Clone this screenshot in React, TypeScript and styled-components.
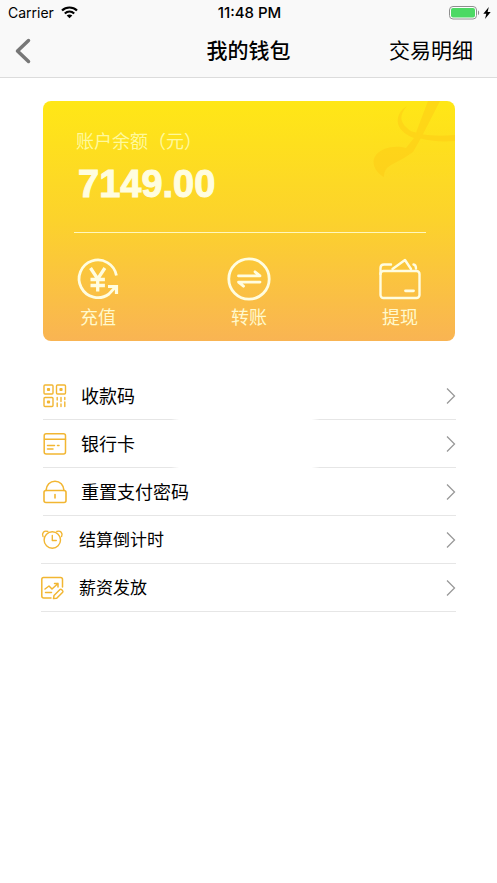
import React from "react";
import styled, { createGlobalStyle } from "styled-components";

const GlobalStyle = createGlobalStyle`
  * { box-sizing: border-box; }
  body {
    margin: 0;
    background: #fff;
    color: #000;
    font-family: "Liberation Sans", "Noto Sans CJK SC", sans-serif;
  }
  button, a { font: inherit; color: inherit; }
  svg { display: block; flex: none; overflow: visible; }
`;

const Page = styled.div`
  min-height: 100vh;
  background: #fff;
`;

const Header = styled.header`
  background: #f9f9f9;
  border-bottom: 1px solid #dcdcdc;
`;

const StatusBar = styled.div`
  display: grid;
  grid-template-columns: 1fr auto 1fr;
  align-items: center;
  height: 25px;
  padding: 0 6px 0 8px;
  font-family: Inter, sans-serif;
  font-size: 14px;
`;

const Carrier = styled.div`
  display: flex;
  align-items: center;
  gap: 7px;
`;

const Clock = styled.time`
  font-size: 15px;
  font-weight: 500;
`;

const Power = styled.div`
  display: flex;
  align-items: center;
  justify-content: flex-end;
  gap: 3px;
`;

const NavBar = styled.nav`
  display: grid;
  grid-template-columns: 1fr auto 1fr;
  align-items: center;
  height: 52px;
  padding: 0 15px;
`;

const BackButton = styled.button`
  justify-self: start;
  padding: 0;
  border: 0;
  background: none;
  color: #777;
  cursor: pointer;
`;

const Title = styled.h1`
  margin: 0;
  font-size: 21px;
  line-height: 30px;
  font-weight: 500;
`;

const NavLink = styled.a`
  justify-self: end;
  padding-right: 9px;
  font-size: 21px;
  line-height: 30px;
  font-weight: 400;
  text-decoration: none;
`;

const Card = styled.section`
  position: relative;
  overflow: hidden;
  margin: 23px 42px 0 43px;
  padding: 28px 29px 10px 31px;
  border-radius: 8px;
  background: linear-gradient(#ffe716, #fcd22c 50%, #f9b453);
  color: #fffde0;
`;

const Flourish = styled.svg`
  position: absolute;
  top: 0;
  right: 0;
`;

const BalanceLabel = styled.div`
  padding-left: 2px;
  font-size: 18px;
  line-height: 26px;
  color: #fff99c;
`;

const Amount = styled.div`
  padding: 7px 0 0 4px;
  font-size: 38px;
  line-height: 44px;
  font-weight: 700;
  -webkit-text-stroke: 1px #fffde0;
`;

const Actions = styled.div`
  display: flex;
  justify-content: space-between;
  margin-top: 26px;
  padding: 24px 5px 0 3px;
  border-top: 1px solid #fff8bd;
`;

const Action = styled.button`
  display: flex;
  flex-direction: column;
  align-items: center;
  gap: 4px;
  padding: 0;
  border: 0;
  background: none;
  font-size: 18px;
  line-height: 26px;
  color: #fff9cc;
  cursor: pointer;
`;

const ActionIcon = styled.span`
  display: grid;
  place-items: center;
  height: 44px;
  color: #fffde0;
`;

const Menu = styled.ul`
  list-style: none;
  margin: 31px 41px 0;
  padding: 0;
`;

const MenuItem = styled.li<{ $broken?: boolean; $inset?: boolean }>`
  margin-left: ${(p) => (p.$inset ? 2 : 0)}px;
  background: ${(p) =>
    p.$broken
      ? "linear-gradient(90deg, #e6e6e6 31%, transparent 33% 65%, #e6e6e6 67%)"
      : "linear-gradient(#e6e6e6, #e6e6e6)"}
    bottom / 100% 1px no-repeat;
`;

const MenuLink = styled.a<{ $inset?: boolean }>`
  display: grid;
  grid-template-columns: 24px 1fr auto;
  align-items: center;
  column-gap: 14px;
  height: 48px;
  font-size: ${(p) => (p.$inset ? 18 : 17)}px;
  line-height: 26px;
  text-decoration: none;
`;

const MenuLabel = styled.span`
  padding-top: 2px;
`;

const line = {
  fill: "none",
  stroke: "currentColor",
  strokeLinecap: "round" as const,
  strokeLinejoin: "round" as const,
};

const WifiIcon = () => (
  <svg width="17" height="13" viewBox="0 0 17 13" aria-hidden="true">
    <g fill="none" stroke="#000" strokeWidth="2.2">
      <path d="M1 4.5C5.2.5 11.8.5 16 4.5" />
      <path d="M3.8 7.5c2.7-2.5 6.7-2.5 9.4 0" />
    </g>
    <path d="M5.7 9.5c1.7-1.5 3.9-1.5 5.6 0L8.5 12.3z" />
  </svg>
);

const BatteryIcon = () => (
  <svg width="31" height="14" viewBox="0 0 31 14" aria-hidden="true">
    <rect x=".5" y=".5" width="27" height="12.5" rx="3.5" fill="#fff" stroke="#8f8f8f" />
    <rect x="2" y="2" width="24" height="9.5" rx="2" fill="#4cd964" />
    <path d="M29 4.5c1.5.6 1.5 3.9 0 4.5z" fill="#8f8f8f" />
  </svg>
);

const BoltIcon = () => (
  <svg width="8" height="12" viewBox="0 0 8 12" aria-hidden="true">
    <path d="M5.8 0 .3 6.7h3L2 12l5.7-7H4.6z" />
  </svg>
);

const BackIcon = () => (
  <svg width="16" height="26" viewBox="0 0 16 26" aria-hidden="true">
    <path d="M13.5 2.5 2.5 13l11 10.5" {...line} strokeWidth="3.5" />
  </svg>
);

const RechargeIcon = () => (
  <svg width="42" height="42" viewBox="0 0 42 42" aria-hidden="true">
    <g {...line} strokeWidth="2.8" strokeLinecap="butt" strokeLinejoin="miter">
      <path d="M39.4 17.5A18.8 18.8 0 1 0 32 36L38 29.5" />
      <path d="M31 28.5H39.5V36" strokeWidth="3.2" />
      <path d="m13.5 10 7.2 11 7.2-11M20.7 20.5v13M13.5 21.5h14.4M13.5 27.5h14.4" strokeWidth="3.3" />
    </g>
  </svg>
);

const TransferIcon = () => (
  <svg width="44" height="44" viewBox="0 0 44 44" aria-hidden="true">
    <g {...line} strokeWidth="2.8">
      <circle cx="22" cy="22" r="20.2" />
      <path d="M11.5 18.9h21.5L28 14.8" />
      <path d="M33 25.1H11.5L16.5 29.2" />
    </g>
  </svg>
);

const WithdrawIcon = () => (
  <svg width="42" height="42" viewBox="0 0 42 42" aria-hidden="true">
    <g {...line} strokeWidth="2.4">
      <rect x="1.5" y="13" width="39" height="27" rx="3" />
      <path d="M1.5 16V10C1.5 7.7 3 6.5 5 6.5h7" />
      <path d="M13.5 11 26 2 32 11M34.5 6.5c1.7.3 2.5 1.5 2.5 4" />
      <path d="M26.5 32.8h8" strokeWidth="2.8" />
    </g>
  </svg>
);

const QrIcon = () => (
  <svg width="24" height="24" viewBox="0 0 24 24" aria-hidden="true">
    <g {...line} strokeWidth="1.4">
      <rect x="1" y="1" width="9" height="9" rx="1" />
      <rect x="13.5" y="1" width="9" height="9" rx="1" />
      <rect x="1" y="13.5" width="9" height="9" rx="1" />
      <path d="M14.2 13.5v2.5M14.2 19v3.5M18 13.5v4M18 20v2.5M21.8 13.5v2M21.8 18v4.5" />
    </g>
    <g fill="currentColor">
      <rect x="3.9" y="3.9" width="3.2" height="3.2" rx="1" />
      <rect x="16.4" y="3.9" width="3.2" height="3.2" rx="1" />
      <rect x="3.9" y="16.4" width="3.2" height="3.2" rx="1" />
    </g>
  </svg>
);

const BankCardIcon = () => (
  <svg width="24" height="24" viewBox="0 0 24 24" aria-hidden="true">
    <g {...line} strokeWidth="1.5">
      <rect x="1.2" y="1.7" width="21.3" height="20.3" rx="2" />
      <path d="M1.5 7.2h21M4.5 13.5h7M14.5 13.5h1.5M4.5 17h5.5" />
    </g>
  </svg>
);

const LockIcon = () => (
  <svg width="24" height="24" viewBox="0 0 24 24" aria-hidden="true">
    <g {...line} strokeWidth="1.6">
      <rect x="1" y="10.5" width="22" height="12" rx="2" />
      <path d="M3 10.5C3.3 5 7 1.2 12 1.2S20.7 5 21 10.5M12 14.5v3.5" />
    </g>
  </svg>
);

const AlarmIcon = () => (
  <svg width="24" height="24" viewBox="0 0 24 24" aria-hidden="true">
    <g {...line} strokeWidth="1.4">
      <circle cx="11.3" cy="12" r="8.2" />
      <path d="M11.3 7.5v5h4M2 8.500C.5 5.500 3 2 6.800 3.500M20.600 8.500C22.100 5.500 19.600 2 15.800 3.500" />
    </g>
  </svg>
);

const PayrollIcon = () => (
  <svg width="24" height="24" viewBox="0 0 24 24" aria-hidden="true">
    <g {...line} strokeWidth="1.5">
      <path d="M21.5 11V3.5c0-1.500-.7-2-2-2H2.500C1.300 1.500.8 2.200.8 3.500v16.500c0 1.300.7 2 2 2H10" />
      <path d="m4 13 4-3 3 3 6-5.500M13.500 7.500H17V11M4.500 16.500h6" />
      <path d="m13 19.500 6-6c1-1 3.700 1.500 2.700 2.700l-6 6-3.200.4z" />
    </g>
  </svg>
);

const ChevronIcon = () => (
  <svg width="10" height="18" viewBox="0 0 10 18" aria-hidden="true">
    <path d="M1 1.5 8.5 9 1 16.5" fill="none" stroke="#999" strokeWidth="1.3" />
  </svg>
);

const IconSlot = styled.span`
  color: #f2b632;
`;

const actions = [
  { label: "充值", Icon: RechargeIcon },
  { label: "转账", Icon: TransferIcon },
  { label: "提现", Icon: WithdrawIcon },
];

const items = [
  { label: "收款码", Icon: QrIcon, inset: true, broken: true },
  { label: "银行卡", Icon: BankCardIcon, inset: true, broken: true },
  { label: "重置支付密码", Icon: LockIcon, inset: true },
  { label: "结算倒计时", Icon: AlarmIcon },
  { label: "薪资发放", Icon: PayrollIcon },
];

export default function App() {
  return (
    <Page>
      <GlobalStyle />
      <Header>
        <StatusBar>
          <Carrier>
            Carrier
            <WifiIcon />
          </Carrier>
          <Clock>11:48 PM</Clock>
          <Power>
            <BatteryIcon />
            <BoltIcon />
          </Power>
        </StatusBar>
        <NavBar>
          <BackButton aria-label="返回">
            <BackIcon />
          </BackButton>
          <Title>我的钱包</Title>
          <NavLink href="#details">交易明细</NavLink>
        </NavBar>
      </Header>
      <main>
        <Card>
          <Flourish width="84" height="78" viewBox="0 0 84 78" aria-hidden="true">
            <g fill="#fdc915" opacity=".5">
              <path d="M57 0h12L50 37l-8 14-9 6-13 7c-5 3-7 6-7 12C5 72-1 62 5 54c6-8 20-10 30-7l8-10z" />
              <path d="M36 5C28 14 29 21 36 27c3 3 6 4 7 4l7 2c10 2 22 2 34 1v6c-14 1-26 0-36-3l-5 0C21 29 24 12 36 5z" />
            </g>
          </Flourish>
          <BalanceLabel>账户余额（元）</BalanceLabel>
          <Amount>7149.00</Amount>
          <Actions>
            {actions.map(({ label, Icon }) => (
              <Action key={label}>
                <ActionIcon>
                  <Icon />
                </ActionIcon>
                {label}
              </Action>
            ))}
          </Actions>
        </Card>
        <Menu>
          {items.map(({ label, Icon, inset, broken }) => (
            <MenuItem key={label} $inset={inset} $broken={broken}>
              <MenuLink href="#" $inset={inset}>
                <IconSlot>
                  <Icon />
                </IconSlot>
                <MenuLabel>{label}</MenuLabel>
                <ChevronIcon />
              </MenuLink>
            </MenuItem>
          ))}
        </Menu>
      </main>
    </Page>
  );
}
